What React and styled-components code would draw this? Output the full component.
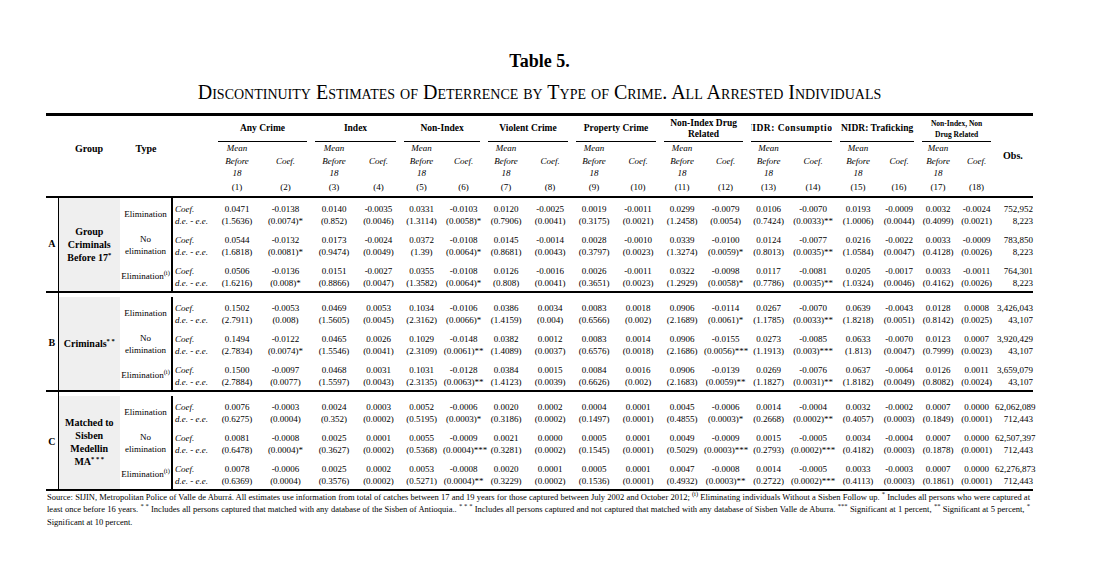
import React from 'react';
import styled, { createGlobalStyle } from 'styled-components';

const GlobalStyle = createGlobalStyle`
  html, body {
    margin: 0;
    padding: 0;
    background: #fff;
  }
  body {
    color: #000;
    font-family: "Liberation Serif", "Times New Roman", serif;
  }
`;

const Page = styled.div`
  width: 987px;
  margin-left: 46px;
  padding-top: 51px;
`;

const Title = styled.h1`
  margin: 0;
  font-size: 18px;
  line-height: 20px;
  font-weight: 700;
  text-align: center;
`;

const Subtitle = styled.h2`
  margin: 11px 0 11px;
  font-size: 20px;
  line-height: 20px;
  font-weight: 400;
  font-variant: small-caps;
  text-align: center;
`;

const Table = styled.table`
  width: 987px;
  table-layout: fixed;
  border-collapse: collapse;
  font-size: 9px;
  line-height: 12.5px;
`;

const Col = styled.col`
  width: ${(p) => p.$w}px;
`;

const Head = styled.thead`
  border-top: 3px solid #000;
  border-bottom: 2px solid #000;
`;

const CornerHead = styled.th`
  padding: 0 0 14px;
  vertical-align: middle;
  font-size: 10px;
  font-weight: 700;
  text-align: center;
`;

const ObsHead = styled.th`
  padding: 0 0 0 8px;
  vertical-align: middle;
  font-size: 10px;
  font-weight: 700;
  text-align: left;
`;

const GroupHead = styled.th`
  height: 26px;
  padding: 0;
  vertical-align: bottom;
  font-size: ${(p) => (p.$small ? '7.5px' : '9.5px')};
  font-weight: 700;
`;

const Underline = styled.div`
  display: flex;
  align-items: center;
  justify-content: center;
  height: 25px;
  margin: 0 4px;
  border-bottom: 1px solid #000;
  overflow: hidden;
  line-height: 11px;
  text-align: center;
  white-space: ${(p) => (p.$clip ? 'nowrap' : 'normal')};
  letter-spacing: ${(p) => (p.$clip ? '0.5px' : '0')};
`;

const SubHead = styled.th`
  padding: 0;
  vertical-align: middle;
  font-style: italic;
  font-weight: 400;
  text-align: center;
`;

const NumHead = styled.th`
  height: 16px;
  padding: 0;
  font-weight: 400;
  text-align: center;
`;

const Panel = styled.tbody`
  border-bottom: 2px solid #000;
`;

const Spacer = styled.tr`
  height: 5px;
  td {
    padding: 0;
  }
`;

const SpacerRule = styled.td`
  border-left: 1px solid #000;
`;

const Letter = styled.td`
  padding: 0;
  vertical-align: middle;
  font-size: 10px;
  font-weight: 700;
  text-align: center;
`;

const GroupCell = styled.td`
  padding: 0 2px;
  border-left: 1px solid #000;
  background: #efefef;
  vertical-align: middle;
  font-size: 10px;
  line-height: 13px;
  font-weight: 700;
  text-align: center;
`;

const TypeCell = styled.td`
  padding: 2px 0 0;
  vertical-align: middle;
  text-align: center;
`;

const Label = styled.td`
  padding: ${(p) => (p.$top ? '5px 0 0 2px' : '0 0 1px 2px')};
  border-left: 2px solid #000;
  font-style: italic;
  white-space: nowrap;
`;

const Num = styled.td`
  padding: ${(p) => (p.$top ? '5px 0 0' : '0 0 1px')};
  text-align: ${(p) => (p.$right ? 'right' : 'center')};
  white-space: nowrap;
`;

const Sup = styled.sup`
  font-size: 6.5px;
  line-height: 0;
  vertical-align: 4px;
`;

const Note = styled.div`
  padding: 0 3px 0 1px;
  font-size: 8.5px;
  line-height: 12.5px;
`;

const NoteLine = styled.p`
  margin: 0;
  text-align: justify;
  text-align-last: ${(p) => (p.$full ? 'justify' : 'left')};
`;

const cols = [12, 62, 52, 42, 46, 51, 46, 43, 43, 41, 44, 44, 44, 44, 44, 43, 43, 46, 44, 38, 40, 37, 38];

const heads = [
  { label: 'Any Crime' },
  { label: 'Index' },
  { label: 'Non-Index' },
  { label: 'Violent Crime' },
  { label: 'Property Crime' },
  { label: <>Non-Index Drug<br />Related</> },
  { label: 'NIDR: Consumption', clip: true },
  { label: 'NIDR: Traficking' },
  { label: <>Non-Index, Non<br />Drug Related</>, small: true },
];

const types = [
  'Elimination',
  <>No<br />elimination</>,
  <>Elimination<Sup>(i)</Sup></>,
];

const panels = [
  {
    letter: 'A',
    group: <>Group<br />Criminals<br />Before 17<Sup>*</Sup></>,
    rows: [
      [
        '0.0471 -0.0138 0.0140 -0.0035 0.0331 -0.0103 0.0120 -0.0025 0.0019 -0.0011 0.0299 -0.0079 0.0106 -0.0070 0.0193 -0.0009 0.0032 -0.0024 752,952',
        '(1.5636) (0.0074)* (0.852) (0.0046) (1.3114) (0.0058)* (0.7906) (0.0041) (0.3175) (0.0021) (1.2458) (0.0054) (0.7424) (0.0033)** (1.0006) (0.0044) (0.4099) (0.0021) 8,223',
      ],
      [
        '0.0544 -0.0132 0.0173 -0.0024 0.0372 -0.0108 0.0145 -0.0014 0.0028 -0.0010 0.0339 -0.0100 0.0124 -0.0077 0.0216 -0.0022 0.0033 -0.0009 783,850',
        '(1.6818) (0.0081)* (0.9474) (0.0049) (1.39) (0.0064)* (0.8681) (0.0043) (0.3797) (0.0023) (1.3274) (0.0059)* (0.8013) (0.0035)** (1.0584) (0.0047) (0.4128) (0.0026) 8,223',
      ],
      [
        '0.0506 -0.0136 0.0151 -0.0027 0.0355 -0.0108 0.0126 -0.0016 0.0026 -0.0011 0.0322 -0.0098 0.0117 -0.0081 0.0205 -0.0017 0.0033 -0.0011 764,301',
        '(1.6216) (0.008)* (0.8866) (0.0047) (1.3582) (0.0064)* (0.808) (0.0041) (0.3651) (0.0023) (1.2929) (0.0058)* (0.7786) (0.0035)** (1.0324) (0.0046) (0.4162) (0.0026) 8,223',
      ],
    ],
  },
  {
    letter: 'B',
    group: <>Criminals<Sup>* *</Sup></>,
    rows: [
      [
        '0.1502 -0.0053 0.0469 0.0053 0.1034 -0.0106 0.0386 0.0034 0.0083 0.0018 0.0906 -0.0114 0.0267 -0.0070 0.0639 -0.0043 0.0128 0.0008 3,426,043',
        '(2.7911) (0.008) (1.5605) (0.0045) (2.3162) (0.0066)* (1.4159) (0.004) (0.6566) (0.002) (2.1689) (0.0061)* (1.1785) (0.0033)** (1.8218) (0.0051) (0.8142) (0.0025) 43,107',
      ],
      [
        '0.1494 -0.0122 0.0465 0.0026 0.1029 -0.0148 0.0382 0.0012 0.0083 0.0014 0.0906 -0.0155 0.0273 -0.0085 0.0633 -0.0070 0.0123 0.0007 3,920,429',
        '(2.7834) (0.0074)* (1.5546) (0.0041) (2.3109) (0.0061)** (1.4089) (0.0037) (0.6576) (0.0018) (2.1686) (0.0056)*** (1.1913) (0.003)*** (1.813) (0.0047) (0.7999) (0.0023) 43,107',
      ],
      [
        '0.1500 -0.0097 0.0468 0.0031 0.1031 -0.0128 0.0384 0.0015 0.0084 0.0016 0.0906 -0.0139 0.0269 -0.0076 0.0637 -0.0064 0.0126 0.0011 3,659,079',
        '(2.7884) (0.0077) (1.5597) (0.0043) (2.3135) (0.0063)** (1.4123) (0.0039) (0.6626) (0.002) (2.1683) (0.0059)** (1.1827) (0.0031)** (1.8182) (0.0049) (0.8082) (0.0024) 43,107',
      ],
    ],
  },
  {
    letter: 'C',
    group: <>Matched to<br />Sisben<br />Medellin<br />MA<Sup>* * *</Sup></>,
    rows: [
      [
        '0.0076 -0.0003 0.0024 0.0003 0.0052 -0.0006 0.0020 0.0002 0.0004 0.0001 0.0045 -0.0006 0.0014 -0.0004 0.0032 -0.0002 0.0007 0.0000 62,062,089',
        '(0.6275) (0.0004) (0.352) (0.0002) (0.5195) (0.0003)* (0.3186) (0.0002) (0.1497) (0.0001) (0.4855) (0.0003)* (0.2668) (0.0002)** (0.4057) (0.0003) (0.1849) (0.0001) 712,443',
      ],
      [
        '0.0081 -0.0008 0.0025 0.0001 0.0055 -0.0009 0.0021 0.0000 0.0005 0.0001 0.0049 -0.0009 0.0015 -0.0005 0.0034 -0.0004 0.0007 0.0000 62,507,397',
        '(0.6478) (0.0004)* (0.3627) (0.0002) (0.5368) (0.0004)*** (0.3281) (0.0002) (0.1545) (0.0001) (0.5029) (0.0003)*** (0.2793) (0.0002)*** (0.4182) (0.0003) (0.1878) (0.0001) 712,443',
      ],
      [
        '0.0078 -0.0006 0.0025 0.0002 0.0053 -0.0008 0.0020 0.0001 0.0005 0.0001 0.0047 -0.0008 0.0014 -0.0005 0.0033 -0.0003 0.0007 0.0000 62,276,873',
        '(0.6369) (0.0004) (0.3576) (0.0002) (0.5271) (0.0004)** (0.3229) (0.0002) (0.1536) (0.0001) (0.4932) (0.0003)** (0.2722) (0.0002)*** (0.4113) (0.0003) (0.1861) (0.0001) 712,443',
      ],
    ],
  },
];

const ValueRow = ({ label, values, top, children }) => (
  <tr>
    {children}
    <Label $top={top}>{label}</Label>
    {values.split(' ').map((v, i) => (
      <Num key={i} $top={top} $right={i === 18}>
        {v}
      </Num>
    ))}
  </tr>
);

const App = () => (
  <Page>
    <GlobalStyle />
    <Title>Table 5.</Title>
    <Subtitle>
      Discontinuity Estimates of Deterrence by Type of Crime. All Arrested Individuals
    </Subtitle>
    <Table>
      <colgroup>
        {cols.map((w, i) => (
          <Col key={i} $w={w} />
        ))}
      </colgroup>
      <Head>
        <tr>
          <th rowSpan={3} />
          <CornerHead rowSpan={3}>Group</CornerHead>
          <CornerHead rowSpan={3}>Type</CornerHead>
          <th rowSpan={3} />
          {heads.map((h, i) => (
            <GroupHead key={i} colSpan={2} $small={h.small}>
              <Underline $clip={h.clip}>{h.label}</Underline>
            </GroupHead>
          ))}
          <ObsHead rowSpan={3}>Obs.</ObsHead>
        </tr>
        <tr>
          {heads.map((h, i) => (
            <React.Fragment key={i}>
              <SubHead>
                Mean
                <br />
                Before
                <br />
                18
              </SubHead>
              <SubHead>Coef.</SubHead>
            </React.Fragment>
          ))}
        </tr>
        <tr>
          {cols.slice(4, 22).map((w, i) => (
            <NumHead key={i}>({i + 1})</NumHead>
          ))}
        </tr>
      </Head>
      {panels.map((panel, p) => (
        <Panel key={panel.letter}>
          {p > 0 && (
            <Spacer>
              <td />
              <SpacerRule />
              <td colSpan={21} />
            </Spacer>
          )}
          {panel.rows.map(([coef, de], r) => (
            <React.Fragment key={r}>
              <ValueRow label="Coef." values={coef} top>
                {r === 0 && <Letter rowSpan={6}>{panel.letter}</Letter>}
                {r === 0 && <GroupCell rowSpan={6}>{panel.group}</GroupCell>}
                <TypeCell rowSpan={2}>{types[r]}</TypeCell>
              </ValueRow>
              <ValueRow label="d.e. - e.e." values={de} />
            </React.Fragment>
          ))}
        </Panel>
      ))}
    </Table>
    <Note>
      <NoteLine $full>
        Source: SIJIN, Metropolitan Police of Valle de Aburrá. All estimates use information from
        total of catches between 17 and 19 years for those captured between July 2002 and October
        2012; <Sup>(i)</Sup> Eliminating individuals Without a Sisben Follow up. <Sup>*</Sup>{' '}
        Includes all persons who were captured at
      </NoteLine>
      <NoteLine $full>
        least once before 16 years. <Sup>* *</Sup> Includes all persons captured that matched with
        any database of the Sisben of Antioquia.. <Sup>* * *</Sup> Includes all persons captured and
        not captured that matched with any database of Sisben Valle de Aburra. <Sup>***</Sup>{' '}
        Significant at 1 percent, <Sup>**</Sup> Significant at 5 percent, <Sup>*</Sup>
      </NoteLine>
      <NoteLine>Significant at 10 percent.</NoteLine>
    </Note>
  </Page>
);

export default App;
